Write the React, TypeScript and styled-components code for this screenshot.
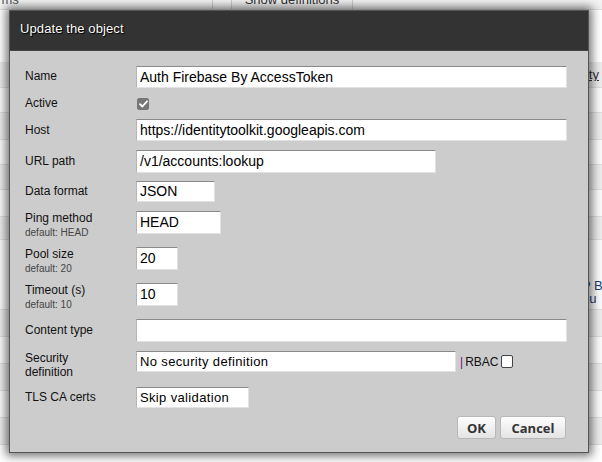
import React from "react";
import styled, { createGlobalStyle } from "styled-components";

const Global = createGlobalStyle`
  html, body { margin: 0; padding: 0; background: #fff; }
  body { width: 602px; height: 462px; overflow: hidden; font-family: "Liberation Sans", Arial, sans-serif; }
  #root { position: relative; width: 602px; height: 462px; }
`;

const Page = styled.div`
  position: relative;
  width: 602px;
  height: 462px;
  overflow: hidden;
  background: #fff;
`;

const TopBar = styled.div`
  display: flex;
  align-items: stretch;
  height: 20px;
  margin-top: -11px;
  border-bottom: 1px solid #ddd;
  background: linear-gradient(#fafafa, #efefef);
`;

const Tab = styled.div`
  width: 230px;
  margin-left: -18px;
  padding-top: 3px;
  font-size: 13px;
  color: #555;
  border-right: 1px solid #ccc;
`;

const DefsButton = styled.div`
  margin-left: 18px;
  width: 120px;
  padding-top: 3px;
  font-size: 13px;
  color: #333;
  text-align: center;
  border-left: 1px solid #ccc;
  border-right: 1px solid #ccc;
  background: linear-gradient(#fff, #e8e8e8);
`;

const Table = styled.div`
  margin-top: 52px;
  display: flex;
  flex-direction: column;
`;

const TRow = styled.div<{ $h: number; $alt?: boolean }>`
  height: ${(p) => p.$h}px;
  border-bottom: 1px solid #ddd;
  background: ${(p) => (p.$alt ? "#ececec" : "#fafafa")};
  display: flex;
  justify-content: flex-end;
  align-items: center;
  font-size: 13px;
  color: #333;
`;

const TCell = styled.div<{ $offset?: number }>`
  width: 14px;
  overflow: hidden;
  white-space: nowrap;
  line-height: 13px;
  display: flex;
  flex-direction: column;
  align-items: flex-start;
  padding-top: ${(p) => p.$offset ?? 0}px;
`;

const LinkText = styled.span`
  text-decoration: underline;
  color: #333;
  margin-left: -36px;
`;

const BlueText = styled.span`
  display: block;
  color: #1a3d6e;
  margin-left: -6px;
`;

const Dialog = styled.div`
  position: absolute;
  left: 9px;
  top: 10px;
  width: 578px;
  height: 441px;
  border: 1px solid #555;
  background: #ccc;
  box-shadow: 0 0 9px 3px rgba(0, 0, 0, 0.55);
  display: flex;
  flex-direction: column;
`;

const Header = styled.div`
  height: 40px;
  background: #333;
  border-bottom: 1px solid #444;
  display: flex;
  align-items: center;
  padding-left: 10px;
  padding-bottom: 5px;
  box-sizing: border-box;
`;

const Title = styled.div`
  color: #fff;
  font-size: 13px;
  text-shadow: 1px 1px 1px #000, 0 0 1px #000;
  letter-spacing: 0.1px;
`;

const Body = styled.div`
  padding: 15px 21px 0 15px;
  display: flex;
  flex-direction: column;
`;

const Row = styled.div<{ $h: number }>`
  height: ${(p) => p.$h}px;
  display: flex;
  align-items: flex-start;
`;

const Label = styled.div<{ $pad: number }>`
  width: 111px;
  flex: none;
  padding-top: ${(p) => p.$pad}px;
  font-size: 12px;
  line-height: 14px;
  color: #111;
`;

const Sub = styled.div`
  font-size: 10px;
  line-height: 14px;
  color: #444;
  margin-top: 1px;
`;

const Field = styled.div<{ $w: number; $h: number; $size?: number }>`
  width: ${(p) => p.$w}px;
  height: ${(p) => p.$h}px;
  box-sizing: border-box;
  background: #fff;
  border-top: 1px solid #8a8a8a;
  border-left: 1px solid #b5b5b5;
  border-right: 1px solid #e2e2e2;
  border-bottom: 1px solid #e2e2e2;
  padding-left: 3px;
  font-size: ${(p) => p.$size ?? 14}px;
  line-height: ${(p) => p.$h - 2}px;
  color: #000;
  white-space: nowrap;
  overflow: hidden;
  letter-spacing: ${(p) => (p.$size === 13 ? "0.35px" : "0")};
`;

const Check = styled.span<{ $checked?: boolean; $gap?: number }>`
  display: inline-flex;
  align-items: center;
  justify-content: center;
  width: 12px;
  height: 12px;
  box-sizing: border-box;
  border-radius: 2px;
  background: ${(p) => (p.$checked ? "#767676" : "#fff")};
  border: 1px solid ${(p) => (p.$checked ? "#767676" : "#444")};
  margin-left: ${(p) => p.$gap ?? 1}px;
`;

const Extra = styled.div`
  display: flex;
  align-items: center;
  height: 21px;
  margin-left: 4px;
  font-size: 12px;
  color: #111;
`;

const Pipe = styled.span`
  color: #7a0a7a;
  margin-right: 2px;
`;

const Buttons = styled.div`
  display: flex;
  justify-content: flex-end;
  gap: 4px;
  padding-right: 1px;
`;

const Button = styled.button<{ $w: number }>`
  width: ${(p) => p.$w}px;
  height: 23px;
  padding: 0;
  border: 1px solid #b8b8b8;
  border-radius: 3px;
  background: linear-gradient(#fdfdfd, #e4e4e4);
  font-family: "Open Sans", "Liberation Sans", sans-serif;
  font-weight: 700;
  font-size: 13px;
  color: #333;
  line-height: 20px;
`;

const CheckMark = () => (
  <svg width="9" height="8" viewBox="0 0 9 8">
    <path d="M1 4.2 L3.4 6.5 L8 1.3" fill="none" stroke="#fff" strokeWidth="1.8" strokeLinecap="round" strokeLinejoin="round" />
  </svg>
);

const bgRows: { h: number; alt?: boolean; offset?: number; content?: React.ReactNode }[] = [
  { h: 25, alt: true, content: <LinkText>Security</LinkText> },
  { h: 24 },
  { h: 26, alt: true },
  { h: 24 },
  { h: 24, alt: true },
  { h: 26 },
  { h: 22, alt: true },
  { h: 69, offset: 34, content: <><BlueText>P B</BlueText><BlueText>ou</BlueText></> },
  { h: 26, alt: true },
  { h: 26 },
  { h: 26, alt: true },
  { h: 26 },
  { h: 26, alt: true },
];

export default function App() {
  return (
    <Page>
      <Global />
      <TopBar>
        <Tab>Forms</Tab>
        <DefsButton>Show definitions</DefsButton>
      </TopBar>
      <Table>
        {bgRows.map((r, i) => (
          <TRow key={i} $h={r.h} $alt={r.alt}>
            <TCell $offset={r.offset}>{r.content}</TCell>
          </TRow>
        ))}
      </Table>

      <Dialog>
        <Header>
          <Title>Update the object</Title>
        </Header>
        <Body>
          <Row $h={32}>
            <Label $pad={3}>Name</Label>
            <Field $w={431} $h={22}>Auth Firebase By AccessToken</Field>
          </Row>
          <Row $h={21}>
            <Label $pad={0} style={{ marginTop: -2 }}>Active</Label>
            <Check $checked>
              <CheckMark />
            </Check>
          </Row>
          <Row $h={31}>
            <Label $pad={4}>Host</Label>
            <Field $w={431} $h={22}>https://identitytoolkit.googleapis.com</Field>
          </Row>
          <Row $h={31}>
            <Label $pad={4}>URL path</Label>
            <Field $w={300} $h={23}>/v1/accounts:lookup</Field>
          </Row>
          <Row $h={30}>
            <Label $pad={3}>Data format</Label>
            <Field $w={79} $h={21}>JSON</Field>
          </Row>
          <Row $h={36}>
            <Label $pad={0}>
              Ping method
              <Sub>default: HEAD</Sub>
            </Label>
            <Field $w={85} $h={23}>HEAD</Field>
          </Row>
          <Row $h={36}>
            <Label $pad={0}>
              Pool size
              <Sub>default: 20</Sub>
            </Label>
            <Field $w={42} $h={23}>20</Field>
          </Row>
          <Row $h={36}>
            <Label $pad={0}>
              Timeout (s)
              <Sub>default: 10</Sub>
            </Label>
            <Field $w={42} $h={23}>10</Field>
          </Row>
          <Row $h={32}>
            <Label $pad={4}>Content type</Label>
            <Field $w={431} $h={23}></Field>
          </Row>
          <Row $h={36}>
            <Label $pad={0}>
              Security
              <br />
              definition
            </Label>
            <Field $w={320} $h={21} $size={13}>No security definition</Field>
            <Extra>
              <Pipe>|</Pipe>RBAC
              <Check $gap={3} style={{ height: 13 }} />
            </Extra>
          </Row>
          <Row $h={29}>
            <Label $pad={3}>TLS CA certs</Label>
            <Field $w={113} $h={21} $size={13}>Skip validation</Field>
          </Row>
          <Buttons>
            <Button $w={39}>OK</Button>
            <Button $w={66}>Cancel</Button>
          </Buttons>
        </Body>
      </Dialog>
    </Page>
  );
}
